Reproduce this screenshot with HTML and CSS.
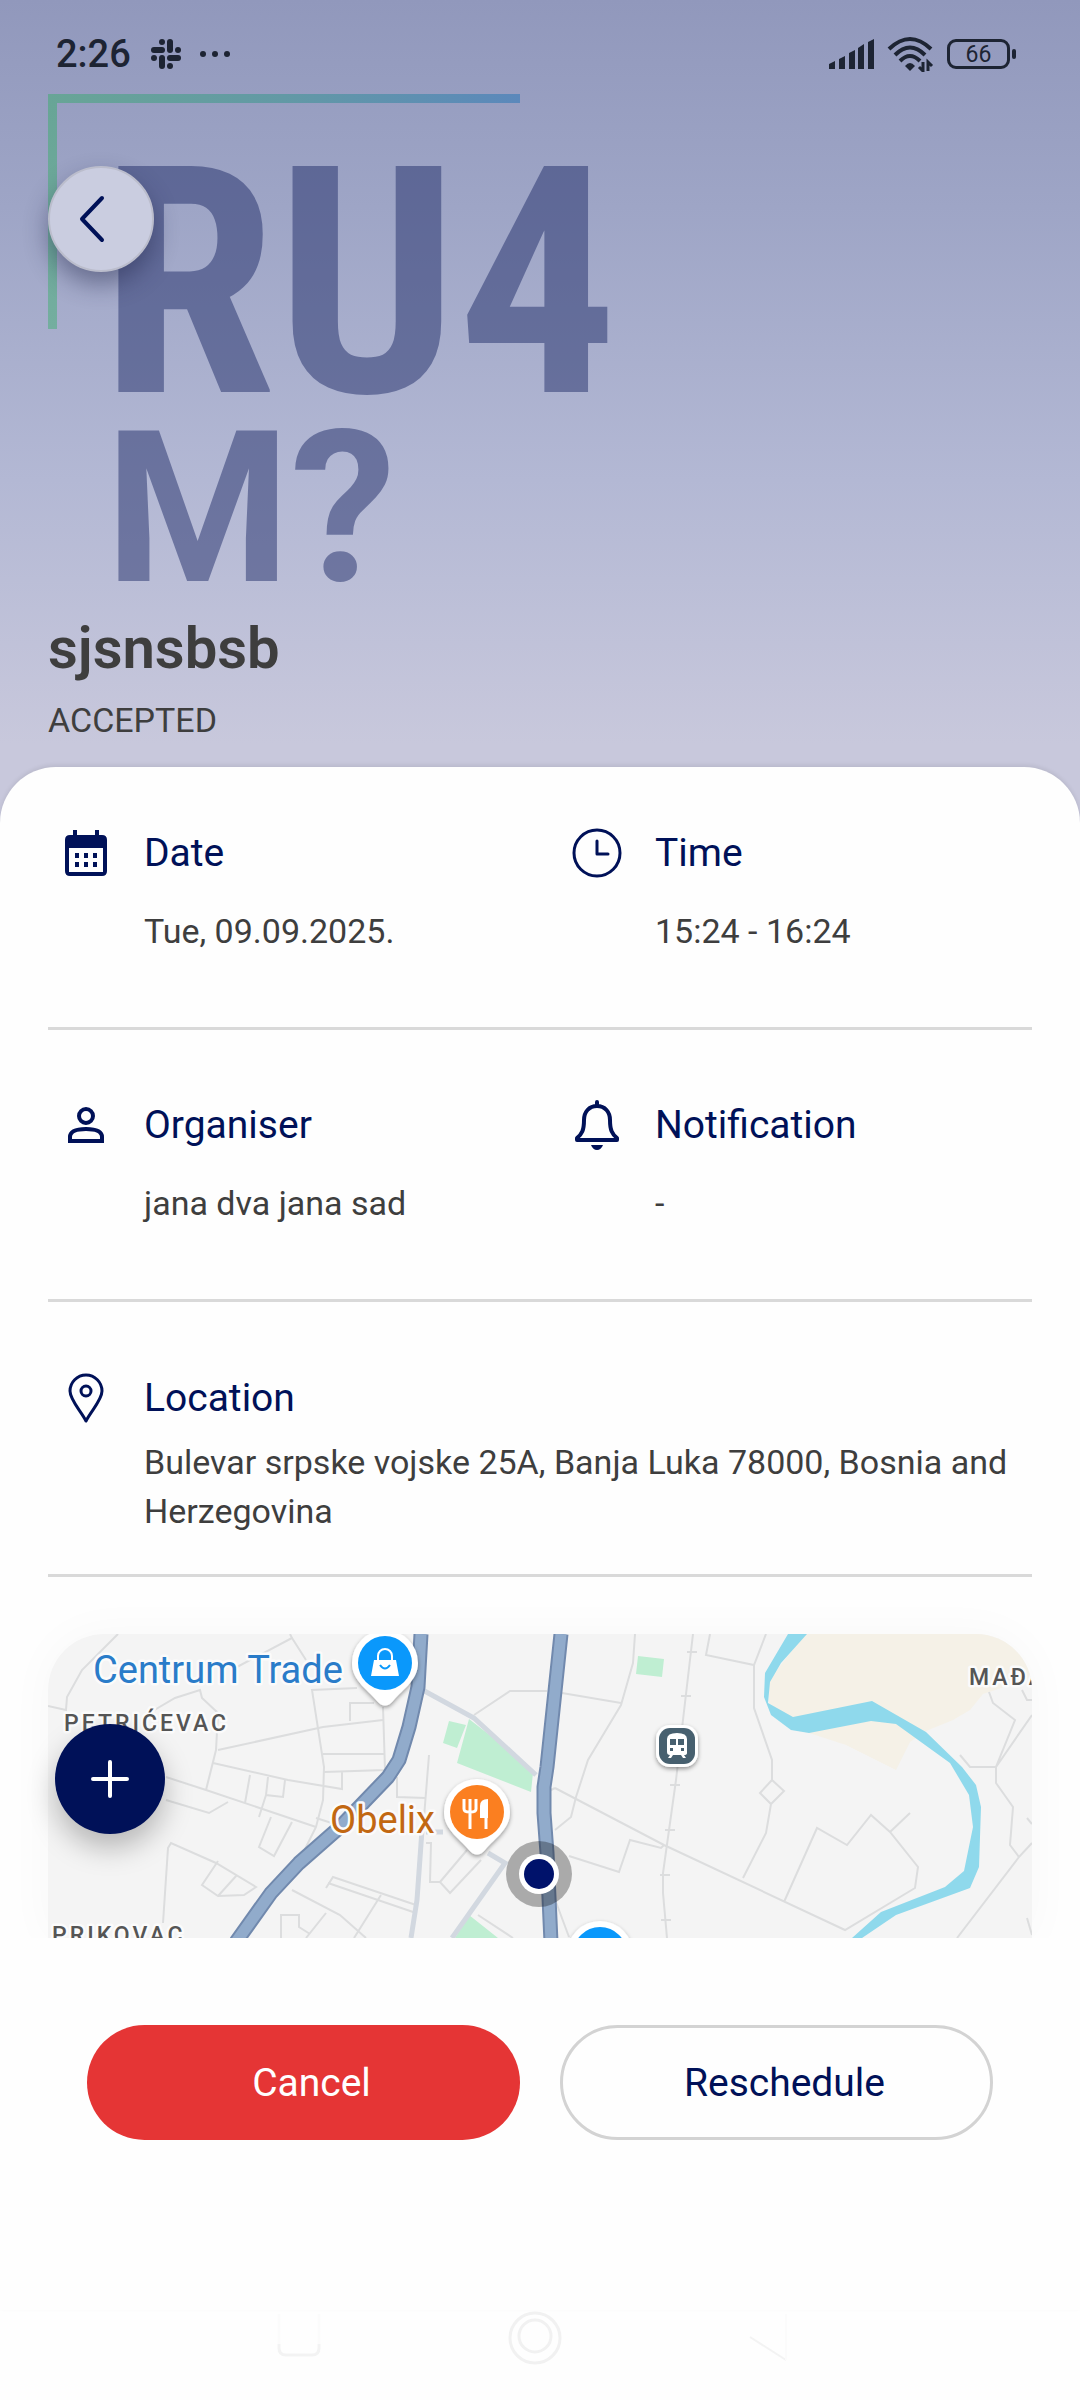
FILE: index.html
```html
<!DOCTYPE html>
<html lang="en">
<head>
  <meta charset="utf-8">
  <meta name="viewport" content="width=device-width, initial-scale=1">
  <title>sjsnsbsb</title>
  <link rel="stylesheet" href="styles.css">
</head>
<body>
  <div class="app">
    <header class="hero">
      <div class="status-bar">
        <span class="clock">2:26</span>
        <svg class="status-slack" width="30" height="30" viewBox="0 0 30 30" fill="#1d2433">
          <rect x="8" y="0" width="6" height="6" rx="3"/>
          <rect x="16" y="0" width="6" height="14" rx="3"/>
          <rect x="0" y="8" width="14" height="6" rx="3"/>
          <rect x="24" y="8" width="6" height="6" rx="3"/>
          <rect x="0" y="16" width="6" height="6" rx="3"/>
          <rect x="16" y="16" width="14" height="6" rx="3"/>
          <rect x="8" y="16" width="6" height="14" rx="3"/>
          <rect x="16" y="24" width="6" height="6" rx="3"/>
        </svg>
        <svg width="32" height="8" viewBox="0 0 32 8" fill="#1d2433">
          <circle cx="4" cy="4" r="3"/><circle cx="16" cy="4" r="3"/><circle cx="28" cy="4" r="3"/>
        </svg>
        <div class="status-right">
          <svg width="46" height="30" viewBox="0 0 46 30" fill="#1d2433">
            <path d="M0 25l6-3v8H0zM10 20l6-3v13h-6zM20 14l6-3v19h-6zM29 9l6-4v25h-6zM39 3l6-3v30h-6z"/>
          </svg>
          <svg width="48" height="36" viewBox="0 0 48 36" fill="none" stroke="#1d2433" stroke-width="4">
            <path d="M2 13Q23-7 44 13M8 19Q23 4 38 19M13 25Q23 15 33 25"/>
            <path d="M18 30q5-6 10 0l-5 5z" fill="#1d2433" stroke="none"/>
            <path d="M36 26v9l-4-4M41 35v-9l4 4" stroke-width="3"/>
          </svg>
          <div class="battery"><span>66</span></div>
        </div>
      </div>

      <button class="back-button" aria-label="Back">
        <svg width="26" height="48" viewBox="0 0 26 48" fill="none" stroke="#001158" stroke-width="4" stroke-linecap="round" stroke-linejoin="round">
          <path d="M23 3L3 24L23 45"/>
        </svg>
      </button>

      <div class="logo">
        <div class="logo-top">RU4</div>
        <div class="logo-bottom">M?</div>
      </div>

      <h1>sjsnsbsb</h1>
      <p class="status">ACCEPTED</p>
    </header>

    <main class="sheet">
      <section class="row">
        <div class="item">
          <svg class="icon" viewBox="0 0 52 52" fill="#001158">
            <path fill-rule="evenodd" d="M13 3h4v5h18V3h4v5h3q5 0 5 5v31q0 5-5 5H10q-5 0-5-5V13q0-5 5-5h3zM9 21v24h34V21z"/>
            <path d="M15 26h4v5h-4zM24 26h4v5h-4zM33 26h4v5h-4zM15 35h4v5h-4zM24 35h4v5h-4zM33 35h4v5h-4z"/>
          </svg>
          <h2>Date</h2>
          <p>Tue, 09.09.2025.</p>
        </div>
        <div class="item">
          <svg class="icon" viewBox="0 0 52 52" fill="none" stroke="#001158" stroke-width="3" stroke-linecap="round" stroke-linejoin="round">
            <circle cx="26" cy="26" r="23"/>
            <path d="M26 14v13h11"/>
          </svg>
          <h2>Time</h2>
          <p>15:24 - 16:24</p>
        </div>
      </section>

      <section class="row">
        <div class="item">
          <svg class="icon" viewBox="0 0 52 52" fill="none" stroke="#001158" stroke-width="4">
            <circle cx="26" cy="17" r="7"/>
            <path d="M10 42v-4q0-8 16-8t16 8v4z"/>
          </svg>
          <h2>Organiser</h2>
          <p>jana dva jana sad</p>
        </div>
        <div class="item">
          <svg class="icon" viewBox="0 0 52 52" fill="none" stroke="#001158" stroke-width="4" stroke-linecap="round" stroke-linejoin="round">
            <path d="M26 3v4M26 7C18 7 13 13 13 21C13 31 11 35 6 39V41H46V39C41 35 39 31 39 21C39 13 34 7 26 7Z"/>
            <path d="M20 46h12q-2 5-6 5t-6-5z" fill="#001158" stroke="none"/>
          </svg>
          <h2>Notification</h2>
          <p>-</p>
        </div>
      </section>

      <section class="row row-location">
        <div class="item">
          <svg class="icon" viewBox="0 0 52 52" fill="none" stroke="#001158" stroke-width="3" stroke-linejoin="round">
            <path d="M26 49C21 39 10 28 10 19A16 16 0 0 1 42 19C42 28 31 39 26 49Z"/>
            <circle cx="26" cy="19" r="5"/>
          </svg>
          <h2>Location</h2>
          <p>Bulevar srpske vojske 25A, Banja Luka 78000, Bosnia and Herzegovina</p>
        </div>
      </section>

      <div class="map-area">
        <svg class="map" viewBox="0 0 984 304" preserveAspectRatio="xMidYMid slice">
          <defs>
            <filter id="pin-shadow" x="-30%" y="-30%" width="160%" height="160%">
              <feDropShadow dx="0" dy="2" stdDeviation="2" flood-opacity="0.4"/>
            </filter>
          </defs>
          <rect width="984" height="304" fill="#f4f4f4"/>

          <!-- land and parks -->
          <path fill="#f5f1e7" d="M757 0H984V44L935 60L922 76L905 86L878 97L862 108L848 136L798 111L761 99L721 69L721 46Z"/>
          <path fill="#bfeed2" d="M421 85L409 129L483 158L485 139L452 109ZM401 87L418 91L409 114L395 109ZM421 281L450 304H407ZM590 22L616 25L614 43L588 40Z"/>

          <!-- small streets -->
          <g fill="none" stroke="#dcddde" stroke-width="2">
            <path d="M70 0L34 36L19 63L18 76L0 72M242 0L244 4L189 33M244 4L258 26M103 78L127 64L152 56L154 64L170 79L168 116L158 156M170 116L275 93L335 86"/>
            <path d="M309 54L264 56L276 133L275 166L268 193L250 229M326 69H302V87M335 73L337 136L276 138M275 120H337M294 138V155L240 146L165 129M118 143L158 156L268 193M118 166L161 179L180 168"/>
            <path d="M202 141L197 169M220 143L218 161L235 163L237 146M218 161L211 183M223 183L211 213L226 222L244 188M115 289L120 214L123 209L168 229L208 253L196 261L170 262L154 251L170 227M189 241L170 262"/>
            <path d="M244 256L292 281L318 304M280 249L368 279M278 254L285 243L368 271M333 261L306 304M278 279L258 304M233 304V281H251V293L262 300M349 143V163L378 164M381 121L375 196M378 209H383L382 248H392L402 259L433 226M392 248L419 216M268 184L290 191"/>
            <path d="M426 81L462 57H499M514 59L573 69M587 0L585 29L573 71L540 126L528 163L523 183L507 196M430 281L465 304M495 160L507 154"/>
            <path d="M645 0L628 146L615 239V259L619 304M639 18h10M633 62h10M622 151h10M617 196h10M612 241h10M613 286h10"/>
            <path d="M662 0L658 21L706 31L718 0M706 31V74L724 126V146L736 157L723 170L712 159L724 146M723 170L718 199L695 244"/>
            <path d="M507 154L616 211L797 296L867 254L870 233L842 198L823 181L799 211L769 194L736 268M842 198L862 179M521 222L571 238L582 206L613 214L616 211M505 260L521 303"/>
            <path d="M941 58L945 69L967 86L948 133V149L965 173L962 211L971 223L984 209M971 223L909 304M912 121L922 133H948L984 81M974 56L979 66H984M979 284L984 301M979 184L984 190"/>
          </g>

          <!-- river -->
          <path fill="#8fd9ec" d="M740 0L717 39L716 63L723 81L743 96L761 99L823 87L848 90L902 129L921 161L925 193L916 237L897 253L833 278L804 304H814L848 281L922 254L931 233L933 173L928 151L914 133L878 98L824 67L745 83L720 69L722 48L733 29L759 0Z"/>

          <!-- main roads -->
          <path fill="none" stroke="#d2d8e0" stroke-width="5" d="M371 54L426 84L488 141M374 196L369 266L363 304M440 219L457 229L404 304M378 198L395 198"/>
          <g fill="none" stroke-linejoin="round">
            <path stroke="#7189ad" stroke-width="15" d="M373 0L370 53L361 93L351 126L340 143L292 193L251 229L223 259L188 308M513 0L499 133L496 153L496 179L499 219L503 308"/>
            <path stroke="#91abcb" stroke-width="11" d="M373 0L370 53L361 93L351 126L340 143L292 193L251 229L223 259L188 308M513 0L499 133L496 153L496 179L499 219L503 308"/>
          </g>

          <g class="area-label">
            <text x="16" y="97">PETRIĆEVAC</text>
            <text x="4" y="309">PRIKOVAC</text>
            <text x="921" y="51">MAĐAR</text>
          </g>
          <text class="place-label shop" x="45" y="49">Centrum Trade</text>
          <text class="place-label food" x="282" y="199">Obelix</text>

          <!-- pins -->
          <g filter="url(#pin-shadow)">
            <path fill="#fff" d="M304 29A33 33 0 1 1 370 29C370 46 356 54 345 67Q337 76 329 67C318 54 304 46 304 29Z"/>
            <path fill="#fff" d="M396 178A33 33 0 1 1 462 178C462 195 448 203 437 216Q429 225 421 216C410 203 396 195 396 178Z"/>
            <circle cx="552" cy="320" r="33" fill="#fff"/>
            <rect x="608" y="91" width="42" height="42" rx="14" fill="#fff"/>
          </g>
          <circle cx="337" cy="29" r="27" fill="#0a98fb"/>
          <circle cx="429" cy="178" r="27" fill="#fb7f20"/>
          <circle cx="552" cy="320" r="27" fill="#0a98fb"/>
          <path fill="#fff" d="M326 26H348L351 42H323Z"/>
          <path fill="none" stroke="#fff" stroke-width="2" d="M330 27V22A7 7 0 0 1 344 22V27"/>
          <path fill="none" stroke="#0a98fb" stroke-width="2" d="M332 31Q337 38 342 31"/>
          <path fill="none" stroke="#fff" stroke-width="3" d="M416 165V175Q416 178 422 178Q428 178 428 175V165M422 165V195M438 195V180"/>
          <path fill="#fff" d="M432 184V172Q432 165 440 165V184Z"/>
          <rect x="611" y="94" width="36" height="36" rx="11" fill="#47606f"/>
          <path fill="#fff" fill-rule="evenodd" d="M619 105Q619 99 629 99T639 105V119Q639 121 636 121L638 124H635L633 121H625L623 124H620L622 121Q619 121 619 118ZM622 105V111H628V105ZM630 105V111H636V105Z"/>
          <path fill="#47606f" d="M622 114h3v3h-3zM633 114h3v3h-3z"/>

          <!-- meeting point -->
          <circle cx="491" cy="240" r="33" fill="#000" fill-opacity="0.3"/>
          <circle cx="491" cy="240" r="20" fill="#fff"/>
          <circle cx="491" cy="240" r="15" fill="#00126b"/>
        </svg>

        <button class="add-button" aria-label="Add">
          <svg width="40" height="40" viewBox="0 0 40 40" stroke="#fff" stroke-width="4" stroke-linecap="round">
            <path d="M20 3V37M3 20H37"/>
          </svg>
        </button>
      </div>

      <div class="actions">
        <button class="cancel">Cancel</button>
        <button class="reschedule">Reschedule</button>
      </div>
    </main>

    <div class="system-nav">
      <div class="system-nav-inner">
        <svg width="54" height="56" viewBox="0 0 54 56" fill="none" stroke="#f3f3f3" stroke-width="3">
          <path d="M7 34V38Q7 45 14 45H40Q47 45 47 38V34"/>
          <path stroke="#fbfbfb" d="M7 4V34M47 4V34"/>
        </svg>
        <svg width="54" height="56" viewBox="0 0 54 56" fill="none" stroke="#f1f1f1" stroke-width="3">
          <circle cx="27" cy="28" r="25"/><circle cx="27" cy="26" r="16"/>
        </svg>
        <svg width="54" height="56" viewBox="0 0 54 56" fill="none" stroke="#f3f3f3" stroke-width="2">
          <path d="M6 27L42 50"/>
          <path stroke="#fbfbfb" d="M42 50V4"/>
        </svg>
      </div>
    </div>
  </div>
</body>
</html>
```

FILE: styles.css
```css
* {
  box-sizing: border-box;
}

body {
  margin: 0;
  background-color: #fefefe;
  font-family: Roboto, Arial, sans-serif;
  color: #3e3e3e;
}

h1,
h2,
p {
  margin: 0;
}

button {
  font-family: inherit;
  cursor: pointer;
}

svg {
  flex-shrink: 0;
}

.app {
  display: flex;
  flex-direction: column;
  min-height: 100vh;
}

/* header */

.hero {
  position: relative;
  padding: 14px 48px 82px;
  background: linear-gradient(#9198bc, #9ea5c6 25%, #b3b8d4 58%, #c8c8dc 90%, #c8c8dc);
}

.status-bar {
  display: flex;
  align-items: center;
  height: 80px;
  padding: 0 16px 0 8px;
  color: #1d2433;
}

.clock {
  font-size: 38px;
  font-weight: 500;
}

.status-slack {
  margin: 0 18px 0 20px;
}

.status-right {
  display: flex;
  align-items: center;
  gap: 12px;
  margin-left: auto;
}

.battery {
  position: relative;
  width: 63px;
  height: 30px;
  margin-right: 6px;
  border: 3px solid #1d2433;
  border-radius: 9px;
  font-size: 23px;
  line-height: 25px;
  text-align: center;
}

.battery::after {
  content: "";
  position: absolute;
  top: 7px;
  right: -9px;
  width: 4px;
  height: 10px;
  border-radius: 2px;
  background-color: #1d2433;
}

.back-button {
  position: absolute;
  top: 166px;
  left: 48px;
  display: flex;
  align-items: center;
  justify-content: center;
  width: 106px;
  height: 106px;
  padding: 0 18px 0 0;
  border: 2px solid #bbbdcc;
  border-radius: 50%;
  background-color: #cacde0;
  box-shadow: 0 12px 24px rgba(30, 35, 70, 0.45);
}

.logo {
  padding: 60px 0 7px;
  color: rgba(28, 40, 100, 0.48);
  font-weight: 700;
  background:
    linear-gradient(90deg, #68a596, #6299a5 50%, #5b88bb) no-repeat 0 0 / 472px 9px,
    linear-gradient(#68a596, #74ae9f) no-repeat 0 9px / 9px 226px;
}

.logo-top {
  padding-left: 52px;
  font-family: "Roboto Condensed", "Liberation Sans Narrow", Roboto, sans-serif;
  font-size: 318px;
  line-height: 259px;
}

.logo-bottom {
  padding-left: 57px;
  font-size: 212px;
  line-height: 192px;
}

h1 {
  font-size: 58px;
  font-weight: 600;
  line-height: 72px;
}

.status {
  margin-top: 12px;
  font-size: 34px;
  line-height: 49px;
}

/* details */

.sheet {
  position: relative;
  flex-grow: 1;
  margin-top: -60px;
  padding: 0 48px;
  border-radius: 56px 56px 0 0;
  background-color: #fefefe;
  box-shadow: 0 -2px 4px rgba(0, 0, 0, 0.08);
}

.row {
  display: grid;
  grid-template-columns: 1fr 1fr;
  column-gap: 38px;
  padding: 71px 0;
  border-bottom: 3px solid #d9d9d9;
}

.row:first-child {
  padding-top: 62px;
}

.item {
  display: grid;
  grid-template-columns: 52px 1fr;
  column-gap: 32px;
  row-gap: 30px;
  align-items: center;
  padding-left: 12px;
}

.item p {
  grid-column: 2;
  font-size: 34px;
  line-height: 49px;
}

.icon {
  width: 52px;
  height: 52px;
  margin: -2px 0;
}

h2 {
  font-size: 39px;
  font-weight: 400;
  line-height: 48px;
  color: #001158;
}

.row-location {
  grid-template-columns: 1fr;
  padding: 72px 0 38px;
}

.row-location .item {
  row-gap: 16px;
}

/* map */

.map-area {
  position: relative;
  margin-top: 57px;
  border-radius: 56px 56px 0 0;
  box-shadow: 0 0 48px rgba(0, 0, 0, 0.03);
}

.map {
  display: block;
  width: 100%;
  height: 304px;
  border-radius: 56px 56px 0 0;
}

.map text {
  paint-order: stroke;
  stroke: #fbfbfb;
  stroke-width: 5px;
  stroke-linejoin: round;
}

.area-label {
  font-size: 23px;
  font-weight: 500;
  letter-spacing: 3px;
  fill: #555;
}

.place-label {
  font-size: 38px;
}

.shop {
  fill: #2a7cc9;
}

.food {
  fill: #c26812;
}

.add-button {
  position: absolute;
  top: 90px;
  left: 7px;
  display: flex;
  align-items: center;
  justify-content: center;
  width: 110px;
  height: 110px;
  padding: 0;
  border: none;
  border-radius: 50%;
  background-color: #001158;
  box-shadow: 0 14px 28px rgba(0, 0, 0, 0.25);
}

/* footer buttons */

.actions {
  position: relative;
  display: grid;
  grid-template-columns: 1fr 1fr;
  gap: 40px;
  margin: 0 -48px;
  padding: 87px;
  background-color: #fefefe;
}

.actions button {
  height: 115px;
  padding: 0 0 0 16px;
  border-radius: 58px;
  font-size: 39px;
}

.cancel {
  border: none;
  background-color: #e53535;
  color: #fff;
}

.reschedule {
  border: 3px solid #d3d3d3;
  background-color: #fefefe;
  color: #001158;
}

.system-nav {
  height: 90px;
}

.system-nav-inner {
  display: flex;
  justify-content: center;
  gap: 182px;
  height: 47px;
  padding-right: 10px;
}
```
